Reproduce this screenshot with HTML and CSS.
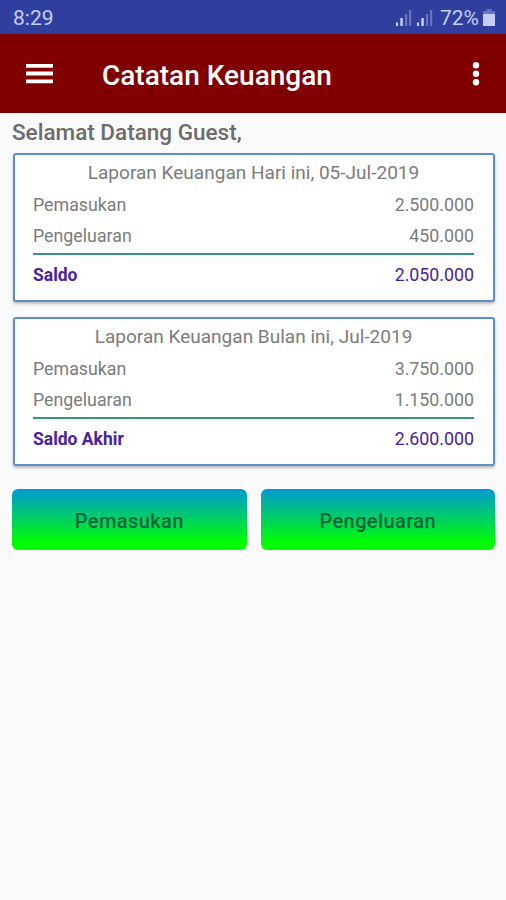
FILE: index.html
```html
<!DOCTYPE html>
<html lang="id">
<head>
  <meta charset="UTF-8" />
  <meta name="viewport" content="width=device-width, initial-scale=1.0" />
  <title>Catatan Keuangan</title>
  <link rel="stylesheet" href="styles.css">
</head>
<body>
  <div class="statusbar">
    <span class="clock">8:29</span>
    <div class="status-icons">
      <svg class="signal" width="16" height="16" viewBox="0 0 16 16">
        <rect class="on" x="0" y="12.5" width="2" height="3.5" />
        <rect class="on" x="4.3" y="8" width="2.5" height="8" />
        <rect class="off" x="9" y="4" width="2.2" height="12" />
        <rect class="off" x="13" y="0" width="2.2" height="16" />
      </svg>
      <svg class="signal" width="16" height="16" viewBox="0 0 16 16">
        <rect class="on" x="0" y="12.5" width="2" height="3.5" />
        <rect class="on" x="4.3" y="8" width="2.5" height="8" />
        <rect class="off" x="9" y="4" width="2.2" height="12" />
        <rect class="off" x="13" y="0" width="2.2" height="16" />
      </svg>
      <span class="percent">72%</span>
      <svg class="battery" width="12" height="17" viewBox="0 0 12 17">
        <path class="off" d="M3.5 0h5v2H12v4H0V2h3.5z" />
        <path class="on" d="M0 5h12v12H0z" />
      </svg>
    </div>
  </div>

  <div class="toolbar">
    <svg class="menu" width="28" height="20" viewBox="0 0 28 20">
      <path d="M0 0h27v3.8H0zM0 7.6h27v3.8H0zM0 15.4h27v3.8H0z" />
    </svg>
    <h1>Catatan Keuangan</h1>
    <svg class="more" width="8" height="24" viewBox="0 0 8 24">
      <circle cx="4" cy="3.2" r="3.2" />
      <circle cx="4" cy="11.7" r="3.2" />
      <circle cx="4" cy="20.2" r="3.2" />
    </svg>
  </div>

  <div class="container">
    <h2>Selamat Datang Guest,</h2>

    <div class="card">
      <div class="card-title">Laporan Keuangan Hari ini, 05-Jul-2019</div>
      <div class="row"><span>Pemasukan</span><span class="amount">2.500.000</span></div>
      <div class="row"><span>Pengeluaran</span><span class="amount">450.000</span></div>
      <div class="row total"><b>Saldo</b><span class="amount">2.050.000</span></div>
    </div>

    <div class="card">
      <div class="card-title">Laporan Keuangan Bulan ini, Jul-2019</div>
      <div class="row"><span>Pemasukan</span><span class="amount">3.750.000</span></div>
      <div class="row"><span>Pengeluaran</span><span class="amount">1.150.000</span></div>
      <div class="row total"><b>Saldo Akhir</b><span class="amount">2.600.000</span></div>
    </div>

    <div class="button-group">
      <button>Pemasukan</button>
      <button>Pengeluaran</button>
    </div>
  </div>
</body>
</html>
```
FILE: styles.css
```css
:root {
  --bg-color: #fafafa;
  --text-color: #7c7c7c;
  --heading-color: #6c6c6c;
  --status-bg: #303f9f;
  --status-text: #c5cdf5;
  --toolbar-bg: #800000;
  --border-color: #5f8fcb;
  --line-color: #379481;
  --total-color: #4a22a0;
}

* {
  box-sizing: border-box;
}

body {
  margin: 0;
  min-height: 900px;
  background-color: var(--bg-color);
  color: var(--text-color);
  font-family: Roboto, "Liberation Sans", sans-serif;
}

.statusbar {
  display: flex;
  justify-content: space-between;
  align-items: center;
  height: 34px;
  padding: 1px 11px 0 13px;
  background-color: var(--status-bg);
  color: var(--status-text);
  font-size: 21px;
}

.status-icons {
  display: flex;
  align-items: center;
}

.signal {
  margin-right: 5px;
}

.percent {
  margin: 0 4px 0 2px;
}

.on {
  fill: var(--status-text);
}

.off {
  fill: #6875bd;
}

.toolbar {
  display: flex;
  align-items: center;
  height: 79px;
  padding: 0 26px;
  background-color: var(--toolbar-bg);
  color: #fff;
  fill: #fff;
}

.toolbar h1 {
  flex: 1;
  margin: 3px 0 0 48px;
  font-size: 28px;
  font-weight: 500;
}

.container {
  padding: 6px 11px 0 12px;
}

h2 {
  margin: 0 0 7px;
  color: var(--heading-color);
  font-size: 22.5px;
  line-height: 27px;
  font-weight: 500;
}

.card {
  height: 149px;
  margin: 0 0 15px 1px;
  padding: 3px 19px 0 18px;
  border: 2px solid var(--border-color);
  border-radius: 3px;
  background-color: #fff;
  box-shadow: 0 2px 3px rgba(0, 0, 0, 0.25);
  font-size: 17.8px;
  line-height: 31px;
}

.card-title {
  margin-bottom: 2px;
  text-align: center;
  font-size: 19.05px;
  line-height: 29px;
}

.row {
  display: flex;
  justify-content: space-between;
}

.total {
  margin-top: 2px;
  padding-top: 4px;
  border-top: 2px solid var(--line-color);
  color: var(--total-color);
}

.total b {
  padding-top: 1px;
  font-size: 17.5px;
  font-weight: 700;
}

.button-group {
  display: flex;
  gap: 14px;
  padding-top: 8px;
}

.button-group button {
  flex: 1;
  height: 61px;
  padding: 2px 0 0;
  border: none;
  border-radius: 6px;
  background: linear-gradient(#0099d5, #00ff00 90%);
  color: #08663b;
  font-family: inherit;
  font-size: 20px;
  font-weight: 500;
  letter-spacing: 0.4px;
}
```
